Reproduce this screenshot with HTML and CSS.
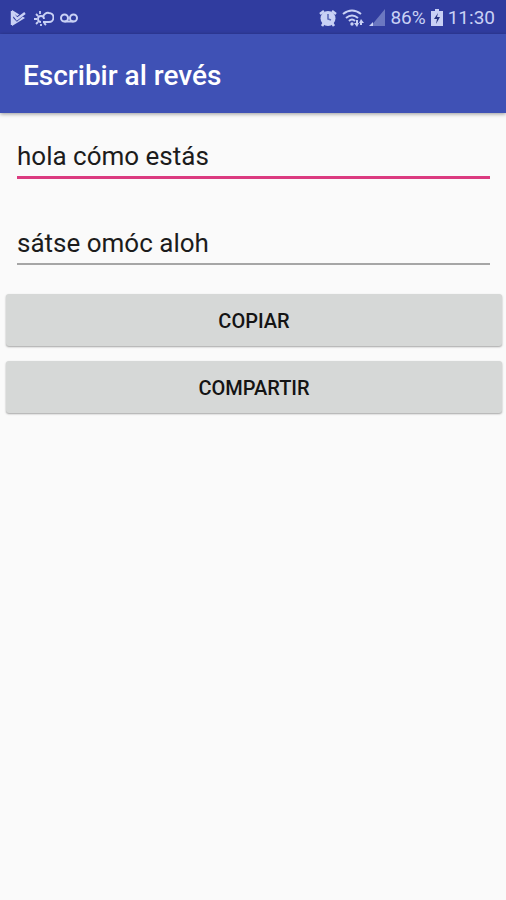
FILE: index.html
```html
<!DOCTYPE html>
<html lang="es">
<head>
<meta charset="utf-8">
<meta name="viewport" content="width=device-width, initial-scale=1">
<title>Escribir al revés</title>
<link rel="stylesheet" href="styles.css">
</head>
<body>
<div class="status-bar">
  <div class="status-group">
    <svg width="16" height="18" viewBox="0 0 16 18" aria-hidden="true">
      <path d="M2 1 15 9 2 17Z" fill="currentColor"/>
      <path d="m4 7 3 3 8-7" fill="none" stroke="#303c9f" stroke-width="4"/>
      <path d="M2 2v14M4 6l3 4 8-6" fill="none" stroke="currentColor" stroke-width="2.4"/>
    </svg>
    <svg class="weather" width="20" height="18" viewBox="0 0 20 18" fill="none" stroke="currentColor" stroke-width="2" aria-hidden="true">
      <path d="M9 13h6a4 4 0 0 0 0-9 5 5 0 0 0-6 4"/>
      <path d="M10 10a3 3 0 1 0-3 3M6 5V2M7 17v-2M0 10h3M2 5l2 2M2 15l2-2M12 16l-2-2" stroke-width="1.8"/>
    </svg>
    <svg width="18" height="18" viewBox="0 0 18 18" fill="none" stroke="currentColor" stroke-width="2" aria-hidden="true">
      <circle cx="4.5" cy="9" r="3.5"/><circle cx="13.5" cy="9" r="3.5"/><path d="M4.5 12.5h9"/>
    </svg>
  </div>
  <div class="status-group status-system">
    <svg width="18" height="18" viewBox="0 0 18 18" aria-hidden="true">
      <circle cx="9" cy="9.5" r="7.5" fill="currentColor"/>
      <path d="M1 5l4-3M13 2l4 3M3 17l2-3M15 17l-2-3" fill="none" stroke="currentColor" stroke-width="2.6"/>
      <path d="M9 5v5l3 1" fill="none" stroke="#5a68b8" stroke-width="1.6"/>
    </svg>
    <svg width="22" height="18" viewBox="0 0 22 18" fill="none" stroke="currentColor" stroke-width="2" aria-hidden="true">
      <path d="M1 5q9-7 18 0M4 9q6-5 12 0M7 12q3-3 6 0"/>
      <circle cx="10" cy="15" r="1.7" fill="currentColor" stroke="none"/>
      <path d="M12 14l3 4 2-4ZM17 14l2-4 3 4Z" fill="currentColor" stroke="none"/>
      <path d="M15 11v4M19 12v4" stroke-width="2"/>
    </svg>
    <svg width="16" height="18" viewBox="0 0 16 18" fill="currentColor" aria-hidden="true">
      <path d="M16 0v17H2Z" opacity=".4"/><path d="M4 13v4H0Z"/>
    </svg>
    <span>86%</span>
    <svg width="12" height="18" viewBox="0 0 12 18" aria-hidden="true">
      <path d="M4 0h4v2h4v15H0V2h4Z" fill="currentColor"/>
      <path d="M7 4 3 10h3l-1 5 4-7H6Z" fill="#26327f"/>
    </svg>
    <time>11:30</time>
  </div>
</div>
<header class="app-bar"><h1>Escribir al revés</h1></header>
<main>
  <form class="fields">
    <input class="field field-active" type="text" aria-label="Texto" value="hola cómo estás">
    <input class="field" type="text" aria-label="Texto al revés" value="sátse omóc aloh">
  </form>
  <div class="actions">
    <button type="button">COPIAR</button>
    <button type="button">COMPARTIR</button>
  </div>
</main>
</body>
</html>
```
FILE: styles.css
```css
* {
  box-sizing: border-box;
}

body {
  margin: 0;
  min-height: 100vh;
  background: #fafafa;
  color: #1c1c1c;
  font-family: Roboto, sans-serif;
}

svg {
  display: block;
  flex: none;
}

.status-bar {
  display: flex;
  align-items: center;
  justify-content: space-between;
  height: 34px;
  padding: 2px 11px 0 10px;
  background: #303c9f;
  color: #c9d1f5;
  font-size: 19px;
  line-height: 24px;
}

.status-group {
  display: flex;
  align-items: center;
  gap: 6px;
}

.weather {
  margin-left: 2px;
}

.status-system {
  gap: 5px;
}

.app-bar {
  display: flex;
  align-items: center;
  height: 79px;
  padding: 4px 23px 0;
  background: #3f51b5;
  box-shadow: 0 1px 4px rgba(0, 0, 0, 0.4);
}

h1 {
  margin: 0;
  color: #fff;
  font-size: 28px;
  font-weight: 500;
  line-height: 32px;
}

.fields {
  display: flex;
  flex-direction: column;
  gap: 44px;
  padding: 24px 16px 0 17px;
}

.field {
  width: 100%;
  height: 42px;
  padding: 0 0 1px;
  border: 0;
  border-bottom: 2px solid #a6a6a6;
  border-radius: 0;
  outline: 0;
  background: transparent;
  color: inherit;
  font-family: inherit;
  font-size: 26px;
}

.field-active {
  border-bottom: 3px solid #db3b80;
}

.actions {
  display: flex;
  flex-direction: column;
  gap: 15px;
  padding: 29px 4px 0 6px;
}

button {
  height: 52px;
  padding: 2px 0 0;
  border: 0;
  border-radius: 3px;
  background: #d6d8d7;
  box-shadow: 0 1px 2px rgba(0, 0, 0, 0.35);
  color: #141414;
  font-family: inherit;
  font-size: 20px;
  font-weight: 500;
}
```
